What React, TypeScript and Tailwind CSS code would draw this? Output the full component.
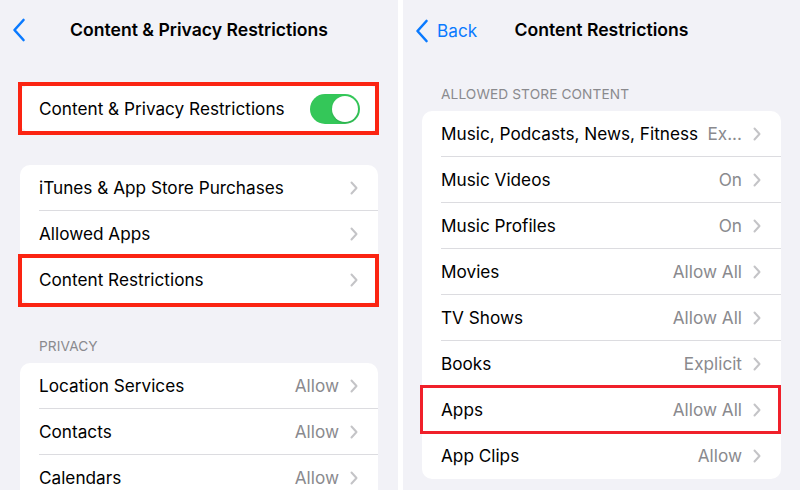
import React from "react"

const font = { fontFamily: "Inter, 'Noto Sans', sans-serif" }

const Chevron = () => (
  <svg width="8" height="14" viewBox="0 0 8 14" className="shrink-0">
    <polyline points="1.5,1.5 6.5,7 1.5,12.5" fill="none" stroke="#c4c4c7" strokeWidth="2" strokeLinecap="round" strokeLinejoin="round" />
  </svg>
)

const BackChevron = () => (
  <svg width="14" height="24" viewBox="0 0 14 24">
    <polyline points="11.5,2 2.5,12 11.5,22" fill="none" stroke="#0a7aff" strokeWidth="2.6" strokeLinecap="round" strokeLinejoin="round" />
  </svg>
)

type RowProps = {
  label: string
  value?: string
  divider?: boolean
  highlight?: "thick" | "thin"
}

const Row = ({ label, value, divider = true, highlight }: RowProps) => (
  <div className="relative flex h-[46px] items-center pl-[19px] pr-[20px]">
    <span className="min-w-0 flex-1 whitespace-nowrap text-[17.2px] text-black">{label}</span>
    {value && (
      <span className="ml-[8px] mr-[11px] shrink-0 whitespace-nowrap text-[17.2px] text-[#8a8a8e]">{value}</span>
    )}
    <Chevron />
    {divider && <div className="absolute bottom-0 left-[19px] right-0 h-px bg-[#dcdce0]" />}
    {highlight === "thick" && (
      <div className="absolute -top-[3px] -bottom-[4px] -left-[2px] -right-[1px] border-4 border-[#fb2412]" />
    )}
    {highlight === "thin" && (
      <div className="absolute -top-[2px] -bottom-[1px] -left-[2px] right-[0px] border-[3px] border-[#f0202a]" />
    )}
  </div>
)

const SectionHeader = ({ children }: { children: React.ReactNode }) => (
  <div className="px-[19px] pb-[6px] text-[13.7px] uppercase tracking-[0.1px] text-[#8a8a8e]">{children}</div>
)

export default function App() {
  return (
    <div className="flex h-[490px] w-[800px] overflow-hidden bg-white" style={font}>
      {/* LEFT */}
      <div className="flex w-[398px] shrink-0 flex-col bg-[#f2f2f7] px-[20px]">
        <div className="relative flex h-[60px] shrink-0 items-center justify-center">
          <div className="absolute left-[-8px] top-[18px]">
            <BackChevron />
          </div>
          <span className="text-[17.6px] font-semibold text-black">Content &amp; Privacy Restrictions</span>
        </div>

        <div className="relative mt-[25px] flex h-[47px] shrink-0 items-center rounded-[10px] bg-white pl-[19px] pr-[18px]">
          <span className="flex-1 text-[17.2px] text-black">Content &amp; Privacy Restrictions</span>
          <div className="flex h-[30px] w-[50px] items-center justify-end rounded-full bg-[#34c759] pr-[2px]">
            <div className="h-[26px] w-[26px] rounded-full bg-white shadow-[0_1px_2px_rgba(0,0,0,0.15)]" />
          </div>
          <div className="absolute -top-[3px] -bottom-[3px] -left-[2px] -right-[1px] border-4 border-[#fb2412]" />
        </div>

        <div className="mt-[33px] shrink-0 rounded-[10px] bg-white">
          <Row label="iTunes & App Store Purchases" />
          <Row label="Allowed Apps" divider={false} />
          <Row label="Content Restrictions" divider={false} highlight="thick" />
        </div>

        <div className="mt-[33px] shrink-0">
          <SectionHeader>Privacy</SectionHeader>
        </div>
        <div className="shrink-0 rounded-[10px] bg-white">
          <Row label="Location Services" value="Allow" />
          <Row label="Contacts" value="Allow" />
          <Row label="Calendars" value="Allow" divider={false} />
        </div>
      </div>

      {/* RIGHT */}
      <div className="ml-[5px] flex min-w-0 flex-1 flex-col bg-[#f2f2f7] pl-[19px] pr-[19px]">
        <div className="relative flex h-[60px] shrink-0 items-center justify-center">
          <div className="absolute left-[-7px] top-[18px] flex items-center gap-[8px]">
            <BackChevron />
            <span className="text-[17.2px] text-[#0a7aff]">Back</span>
          </div>
          <span className="text-[17.6px] font-semibold text-black">Content Restrictions</span>
        </div>

        <div className="mt-[24px] shrink-0">
          <SectionHeader>Allowed Store Content</SectionHeader>
        </div>
        <div className="shrink-0 rounded-[10px] bg-white">
          <Row label="Music, Podcasts, News, Fitness" value="Ex..." />
          <Row label="Music Videos" value="On" />
          <Row label="Music Profiles" value="On" />
          <Row label="Movies" value="Allow All" />
          <Row label="TV Shows" value="Allow All" />
          <Row label="Books" value="Explicit" divider={false} />
          <Row label="Apps" value="Allow All" divider={false} highlight="thin" />
          <Row label="App Clips" value="Allow" divider={false} />
        </div>
      </div>
    </div>
  )
}
